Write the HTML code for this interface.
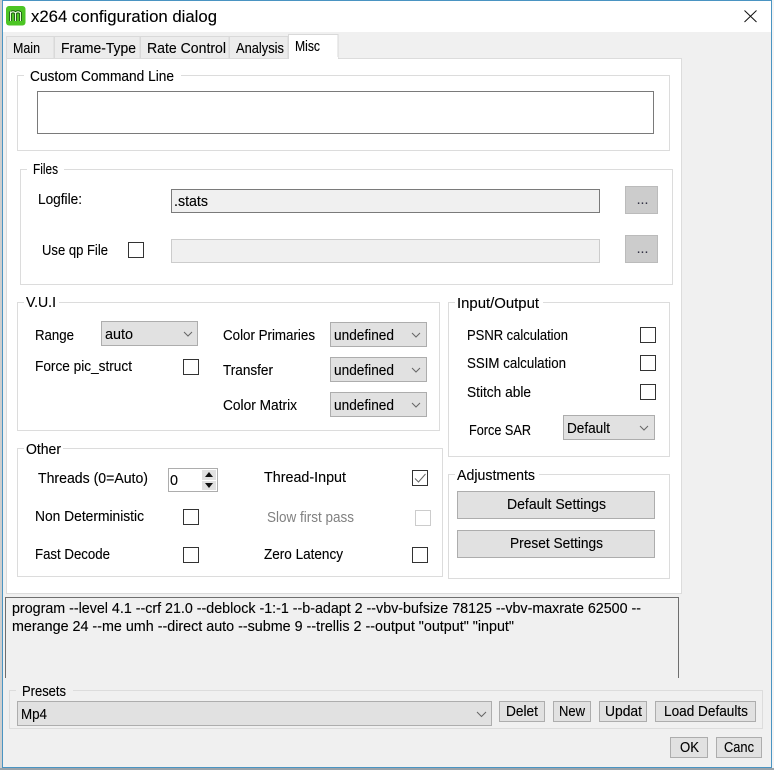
<!DOCTYPE html>
<html><head><meta charset="utf-8"><title>x264 configuration dialog</title>
<style>
html,body{margin:0;padding:0;background:#f0f0f0;overflow:hidden}
svg{display:block}
text{font-family:"Liberation Sans",sans-serif;font-size:15px;fill:#000;stroke:#000;stroke-width:.12px}
.g{fill:#fff;stroke:#dcdcdc;stroke-width:1}
.gc{fill:#f0f0f0;stroke:#dcdcdc;stroke-width:1}
.cb{fill:#fff;stroke:#333;stroke-width:1}
.c{fill:#e1e1e1;stroke:#adadad;stroke-width:1}
.a{fill:none;stroke:#666;stroke-width:1}
.t{fill:#ececec;stroke:#d9d9d9;stroke-width:1}
</style></head><body>
<svg width="774" height="770" viewBox="0 0 774 770" xmlns="http://www.w3.org/2000/svg" style="width:774px;height:770px">
<rect width="774" height="770" fill="#f4f4f4"/>
<rect x="0" y="0" width="2" height="770" fill="#cfcfcf"/>
<rect x="772" y="0" width="2" height="770" fill="#f4f4f4"/>
<rect x="0" y="768" width="774" height="2" fill="#9aa3aa"/>
<rect x="2.5" y="0.5" width="769" height="767" fill="#f0f0f0" stroke="#4a94c2"/>
<rect x="3" y="1" width="768" height="31" fill="#fff"/>

<!-- app icon -->
<rect x="6" y="6" width="19.500" height="19.500" rx="3" fill="#4cc524"/>
<path d="M10.500 21V11.500M15.500 21V12M20.500 21V12M10.500 13Q13 10.500 15.500 13Q18 10.500 20.500 13" fill="none" stroke="#14520c" stroke-width="3"/>
<path d="M10.500 21V11.500M15.500 21V12M20.500 21V12M10.500 13Q13 10.500 15.500 13Q18 10.500 20.500 13" fill="none" stroke="#e6ffd8" stroke-width="1.200"/>
<text x="31" y="22" style="font-size:17px" textLength="186" lengthAdjust="spacingAndGlyphs">x264 configuration dialog</text>
<path d="M744.5 10.5L756.5 22M756.5 10.5L744.5 22" stroke="#111" stroke-width="1" fill="none"/>

<!-- tabs -->
<rect x="6.5" y="36.5" width="47.5" height="22" class="t"/>
<rect x="54.5" y="36.5" width="85.5" height="22" class="t"/>
<rect x="140.5" y="36.5" width="88.5" height="22" class="t"/>
<rect x="229.5" y="36.5" width="58.5" height="22" class="t"/>
<rect x="6.5" y="58.5" width="675" height="535" class="g"/>
<rect x="288.5" y="34.5" width="49.5" height="24" fill="#fff" stroke="#d9d9d9"/>
<rect x="289" y="57" width="49" height="3" fill="#fff"/>
<text x="13" y="53" textLength="27" lengthAdjust="spacingAndGlyphs">Main</text>
<text x="61" y="53" textLength="75" lengthAdjust="spacingAndGlyphs">Frame-Type</text>
<text x="147" y="53" textLength="79" lengthAdjust="spacingAndGlyphs">Rate Control</text>
<text x="236" y="53" textLength="48" lengthAdjust="spacingAndGlyphs">Analysis</text>
<text x="295" y="51" textLength="25" lengthAdjust="spacingAndGlyphs">Misc</text>

<!-- custom command line -->
<rect x="17.5" y="75.5" width="652" height="75" class="g"/>
<rect x="24" y="70" width="157" height="10" fill="#fff"/>
<text x="30" y="81" textLength="144" lengthAdjust="spacingAndGlyphs">Custom Command Line</text>
<rect x="37.5" y="91.5" width="616" height="42" fill="#fff" stroke="#7a7a7a"/>

<!-- files -->
<rect x="20.5" y="169.5" width="652" height="115" class="g"/>
<rect x="27" y="164" width="37" height="10" fill="#fff"/>
<text x="33" y="174" textLength="25" lengthAdjust="spacingAndGlyphs">Files</text>
<text x="38" y="204" textLength="44" lengthAdjust="spacingAndGlyphs">Logfile:</text>
<rect x="171.5" y="189.5" width="428" height="23" fill="#f0f0f0" stroke="#7a7a7a"/>
<text x="174" y="206" textLength="34" lengthAdjust="spacingAndGlyphs">.stats</text>
<rect x="625.5" y="186.5" width="32" height="27" fill="#ccc" stroke="#bbb"/>
<text x="636.500" y="204" style="fill:#334;stroke:none" textLength="12" lengthAdjust="spacing">...</text>
<text x="42" y="255" textLength="66" lengthAdjust="spacingAndGlyphs">Use qp File</text>
<rect x="128.5" y="242.5" width="15" height="15" class="cb"/>
<rect x="171.5" y="239.5" width="428" height="23" fill="#f0f0f0" stroke="#ccc"/>
<rect x="625.5" y="235.5" width="32" height="27" fill="#ccc" stroke="#bbb"/>
<text x="636.500" y="253" style="fill:#334;stroke:none" textLength="12" lengthAdjust="spacing">...</text>

<!-- VUI -->
<rect x="17.5" y="302.5" width="422" height="128" class="g"/>
<rect x="24" y="297" width="35" height="10" fill="#fff"/>
<text x="26" y="307" textLength="30" lengthAdjust="spacingAndGlyphs">V.U.I</text>
<text x="35" y="340" textLength="39" lengthAdjust="spacingAndGlyphs">Range</text>
<rect x="101.5" y="321.5" width="96" height="24" class="c"/>
<text x="105" y="339" textLength="28" lengthAdjust="spacingAndGlyphs">auto</text>
<path d="M184 332l4 4l4-4" class="a"/>
<text x="35" y="371" textLength="97" lengthAdjust="spacingAndGlyphs">Force pic_struct</text>
<rect x="183.5" y="359.5" width="15" height="15" class="cb"/>
<text x="223" y="340" textLength="92" lengthAdjust="spacingAndGlyphs">Color Primaries</text>
<text x="223" y="375" textLength="50" lengthAdjust="spacingAndGlyphs">Transfer</text>
<text x="223" y="410" textLength="74" lengthAdjust="spacingAndGlyphs">Color Matrix</text>
<rect x="330.5" y="322.5" width="96" height="24" class="c"/>
<rect x="330.5" y="357.5" width="96" height="24" class="c"/>
<rect x="330.5" y="392.5" width="96" height="24" class="c"/>
<text x="334" y="340" textLength="60" lengthAdjust="spacingAndGlyphs">undefined</text>
<text x="334" y="375" textLength="60" lengthAdjust="spacingAndGlyphs">undefined</text>
<text x="334" y="410" textLength="60" lengthAdjust="spacingAndGlyphs">undefined</text>
<path d="M412 333l4 4l4-4M412 368l4 4l4-4M412 403l4 4l4-4" class="a"/>

<!-- Input/Output -->
<rect x="448.5" y="302.5" width="221" height="154" class="g"/>
<rect x="455" y="297" width="88" height="10" fill="#fff"/>
<text x="457" y="308" textLength="82" lengthAdjust="spacingAndGlyphs">Input/Output</text>
<text x="467" y="340" textLength="101" lengthAdjust="spacingAndGlyphs">PSNR calculation</text>
<text x="467" y="368" textLength="99" lengthAdjust="spacingAndGlyphs">SSIM calculation</text>
<text x="467" y="397" textLength="64" lengthAdjust="spacingAndGlyphs">Stitch able</text>
<text x="469" y="435" textLength="62" lengthAdjust="spacingAndGlyphs">Force SAR</text>
<rect x="640.5" y="327.5" width="15" height="15" class="cb"/>
<rect x="640.5" y="355.5" width="15" height="15" class="cb"/>
<rect x="640.5" y="384.5" width="15" height="15" class="cb"/>
<rect x="563.5" y="415.5" width="91" height="24" class="c"/>
<text x="567" y="433" textLength="43" lengthAdjust="spacingAndGlyphs">Default</text>
<path d="M640 426l4 4l4-4" class="a"/>

<!-- Other -->
<rect x="17.5" y="448.5" width="425" height="128" class="g"/>
<rect x="24" y="443" width="39" height="10" fill="#fff"/>
<text x="26" y="454" textLength="35" lengthAdjust="spacingAndGlyphs">Other</text>
<text x="38" y="483" textLength="110" lengthAdjust="spacingAndGlyphs">Threads (0=Auto)</text>
<rect x="168.5" y="468.5" width="49" height="23" fill="#fff" stroke="#adadad"/>
<text x="170" y="485" textLength="8" lengthAdjust="spacingAndGlyphs">0</text>
<rect x="202" y="470" width="14" height="10" fill="#e1e1e1"/>
<rect x="202" y="481" width="14" height="9" fill="#e1e1e1"/>
<path d="M209 472l4 5h-8zM209 488l4-5h-8z" fill="#111"/>
<text x="264" y="482" textLength="82" lengthAdjust="spacingAndGlyphs">Thread-Input</text>
<rect x="412.5" y="470.5" width="15" height="15" class="cb"/>
<path d="M415 478.5l3.500 3.500l7-8" fill="none" stroke="#666" stroke-width="1"/>
<text x="35" y="521" textLength="109" lengthAdjust="spacingAndGlyphs">Non Deterministic</text>
<rect x="183.5" y="509.500" width="15" height="15" class="cb"/>
<text x="267" y="522" style="fill:#808080;stroke:none" textLength="87" lengthAdjust="spacingAndGlyphs">Slow first pass</text>
<rect x="415.5" y="510.5" width="15" height="15" fill="#fff" stroke="#ccc"/>
<text x="35" y="559" textLength="75" lengthAdjust="spacingAndGlyphs">Fast Decode</text>
<rect x="183.5" y="547.5" width="15" height="15" class="cb"/>
<text x="264" y="559" textLength="79" lengthAdjust="spacingAndGlyphs">Zero Latency</text>
<rect x="412.5" y="547.5" width="15" height="15" class="cb"/>

<!-- Adjustments -->
<rect x="448.5" y="474.5" width="221" height="104" class="g"/>
<rect x="455" y="469" width="84" height="10" fill="#fff"/>
<text x="457" y="480" textLength="78" lengthAdjust="spacingAndGlyphs">Adjustments</text>
<rect x="457.5" y="491.5" width="197" height="27" class="c"/>
<text x="507" y="509" textLength="99" lengthAdjust="spacingAndGlyphs">Default Settings</text>
<rect x="457.5" y="530.5" width="197" height="27" class="c"/>
<text x="510" y="548" textLength="93" lengthAdjust="spacingAndGlyphs">Preset Settings</text>

<!-- log -->
<path d="M5.500 678V597.500H678.500V678" fill="none" stroke="#6e6e6e"/>
<text x="12" y="613" textLength="629" lengthAdjust="spacingAndGlyphs">program --level 4.1 --crf 21.0 --deblock -1:-1 --b-adapt 2 --vbv-bufsize 78125 --vbv-maxrate 62500 --</text>
<text x="12" y="631" textLength="502" lengthAdjust="spacingAndGlyphs">merange 24 --me umh --direct auto --subme 9 --trellis 2 --output "output" "input"</text>

<!-- presets -->
<rect x="9.500" y="690.500" width="753" height="38" class="gc"/>
<rect x="16" y="685" width="57" height="10" fill="#f0f0f0"/>
<text x="22" y="696" textLength="44" lengthAdjust="spacingAndGlyphs">Presets</text>
<rect x="17.5" y="701.5" width="474" height="24" class="c"/>
<text x="21" y="719" textLength="26" lengthAdjust="spacingAndGlyphs">Mp4</text>
<path d="M477 712l4.500 4.500l4.500-4.500" class="a"/>
<rect x="499.5" y="701.5" width="45" height="20" class="c"/>
<text x="506" y="716" textLength="32" lengthAdjust="spacingAndGlyphs">Delet</text>
<rect x="553.5" y="701.5" width="37" height="20" class="c"/>
<text x="559" y="716" textLength="26" lengthAdjust="spacingAndGlyphs">New</text>
<rect x="599.5" y="701.5" width="47" height="20" class="c"/>
<text x="605" y="716" textLength="37" lengthAdjust="spacingAndGlyphs">Updat</text>
<rect x="655.5" y="701.5" width="100" height="20" class="c"/>
<text x="664" y="716" textLength="84" lengthAdjust="spacingAndGlyphs">Load Defaults</text>
<rect x="670.5" y="737.5" width="37" height="20" class="c"/>
<text x="680" y="752" textLength="19" lengthAdjust="spacingAndGlyphs">OK</text>
<rect x="716.5" y="737.5" width="45" height="20" class="c"/>
<text x="724" y="752" textLength="30" lengthAdjust="spacingAndGlyphs">Canc</text>
</svg>
</body></html>
